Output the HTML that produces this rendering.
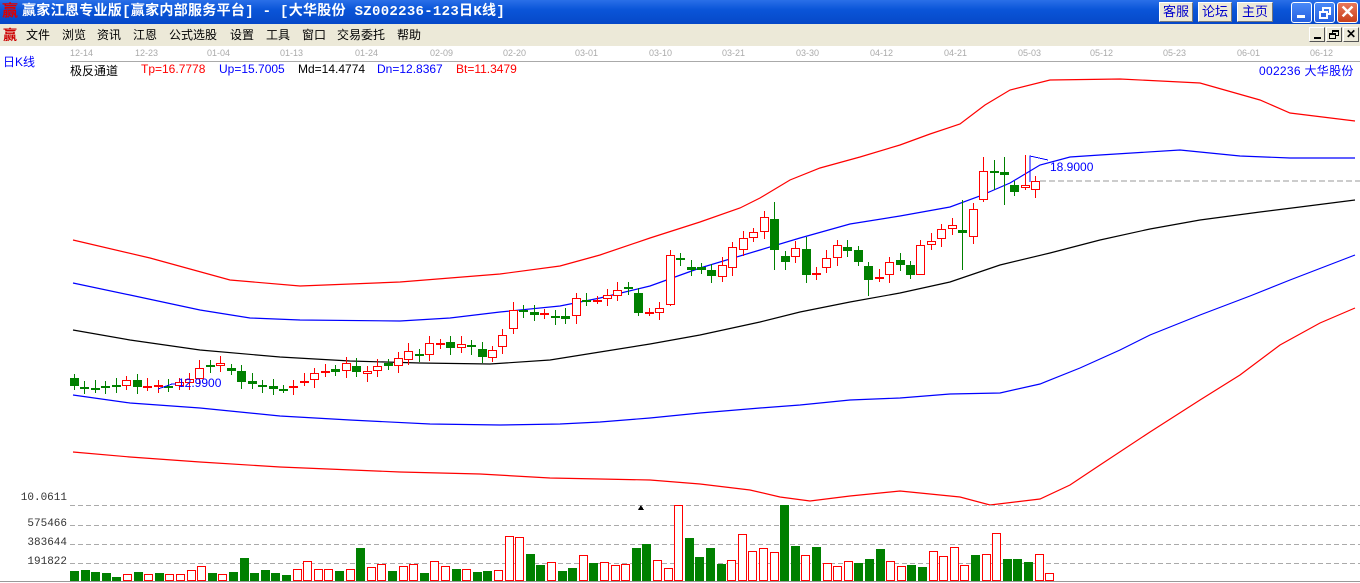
<!DOCTYPE html>
<html><head><meta charset="utf-8"><style>
*{margin:0;padding:0;box-sizing:border-box}
body{width:1360px;height:583px;overflow:hidden;background:#fff;font-family:"Liberation Sans","Noto Sans CJK SC",sans-serif;position:relative}
#title{position:absolute;left:0;top:0;width:1360px;height:24px;background:linear-gradient(#2a6fe8,#0a55d8 40%,#0648c8);color:#fff;font-weight:bold;font-size:14px;line-height:24px}
#title .t{position:absolute;left:22px;top:0;font-family:"Liberation Mono","Noto Sans CJK SC",monospace;letter-spacing:0.3px}
.ico{position:absolute;left:2px;top:3px;color:#d00;font-size:16px;font-weight:bold;line-height:18px;background:#fff0;}
.tb{position:absolute;top:2px;height:20px;background:#ece9d8;border:1px solid #fff;border-right-color:#777;border-bottom-color:#777;color:#00c;font-size:13px;line-height:18px;text-align:center;font-weight:normal}
.wb{position:absolute;top:2px;width:21px;height:21px;border:1px solid #fff;border-radius:3px;background:linear-gradient(#4a8af8,#2560e0)}
#menu{position:absolute;left:0;top:24px;width:1360px;height:22px;background:#ece9d8;font-size:12px;line-height:22px;color:#000}
#menu span{position:absolute;top:0}
.mb{position:absolute;top:27px;width:16px;height:15px;background:#ece9d8;border:1px solid #fff;border-right-color:#555;border-bottom-color:#555}
.d{position:absolute;top:48px;font-size:9px;color:#aaa}
.h{position:absolute;top:62px;font-size:12px}
.v{position:absolute;font-size:11px;color:#333;right:1293px;font-family:"Liberation Mono",monospace}
</style></head><body>
<div id="title"><span class="ico">赢</span><span class="t">赢家江恩专业版[赢家内部服务平台] - [大华股份  SZ002236-123日K线]</span>
<div class="tb" style="left:1159px;width:34px">客服</div>
<div class="tb" style="left:1198px;width:34px">论坛</div>
<div class="tb" style="left:1237px;width:36px">主页</div>
<div class="wb" style="left:1291px"><div style="position:absolute;left:5px;top:12px;width:8px;height:3px;background:#fff"></div></div>
<div class="wb" style="left:1314px"><div style="position:absolute;left:7px;top:4px;width:9px;height:8px;border:2px solid #fff"></div><div style="position:absolute;left:4px;top:8px;width:9px;height:8px;border:2px solid #fff;background:#2d66e4"></div></div>
<div class="wb" style="left:1337px;background:linear-gradient(#e8785a,#c8401a);color:#fff;font-size:18px;line-height:18px;text-align:center">✕</div>
</div>
<div id="menu"><span style="left:3px;color:#c00;font-weight:bold;font-size:14px">赢</span>
<span style="left:26px">文件</span><span style="left:62px">浏览</span><span style="left:97px">资讯</span><span style="left:133px">江恩</span><span style="left:169px">公式选股</span><span style="left:230px">设置</span><span style="left:266px">工具</span><span style="left:302px">窗口</span><span style="left:337px">交易委托</span><span style="left:397px">帮助</span></div>
<div class="mb" style="left:1309px"><div style="position:absolute;left:4px;top:9px;width:7px;height:2px;background:#000"></div></div>
<div class="mb" style="left:1326px"><div style="position:absolute;left:5px;top:2px;width:7px;height:6px;border:1px solid #000;border-top-width:2px"></div><div style="position:absolute;left:2px;top:5px;width:7px;height:6px;border:1px solid #000;border-top-width:2px;background:#ece9d8"></div></div>
<div class="mb" style="left:1343px;font-size:12px;line-height:13px;text-align:center;font-weight:bold">✕</div>
<div style="position:absolute;left:70px;top:61px;width:1290px;height:1px;background:#aaa"></div>
<div class="d" style="left:70px">12-14</div><div class="d" style="left:135px">12-23</div><div class="d" style="left:207px">01-04</div><div class="d" style="left:280px">01-13</div><div class="d" style="left:355px">01-24</div><div class="d" style="left:430px">02-09</div><div class="d" style="left:503px">02-20</div><div class="d" style="left:575px">03-01</div><div class="d" style="left:649px">03-10</div><div class="d" style="left:722px">03-21</div><div class="d" style="left:796px">03-30</div><div class="d" style="left:870px">04-12</div><div class="d" style="left:944px">04-21</div><div class="d" style="left:1018px">05-03</div><div class="d" style="left:1090px">05-12</div><div class="d" style="left:1163px">05-23</div><div class="d" style="left:1237px">06-01</div><div class="d" style="left:1310px">06-12</div>
<div style="position:absolute;left:3px;top:53px;font-size:12px;color:#00f">日K线</div>
<div class="h" style="left:70px">极反通道</div>
<div class="h" style="left:141px;color:#f00">Tp=16.7778</div>
<div class="h" style="left:219px;color:#00f">Up=15.7005</div>
<div class="h" style="left:298px">Md=14.4774</div>
<div class="h" style="left:377px;color:#00f">Dn=12.8367</div>
<div class="h" style="left:456px;color:#f00">Bt=11.3479</div>
<div class="h" style="left:1259px;color:#00f;font-size:12px;letter-spacing:0.3px">002236 大华股份</div>
<div class="v" style="top:492px">10.0611</div>
<div class="v" style="top:518px">575466</div>
<div class="v" style="top:537px">383644</div>
<div class="v" style="top:556px">191822</div>
<svg id="s" width="1360" height="583" style="position:absolute;left:0;top:0" shape-rendering="crispEdges"></svg>
<script>
var s=document.getElementById('s'),h='';
function pl(p,c){h+='<polyline fill="none" stroke="'+c+'" stroke-width="1.2" shape-rendering="auto" points="'+p+'"/>';}
pl("73,240 150,258 230,280 300,286 400,282 500,274 560,266 600,255 650,238 700,222 740,208 760,198 790,180 820,168 860,157 900,145 930,134 960,124 985,105 1010,90 1050,80 1120,79 1200,83 1260,100 1290,113 1355,121","#f00");
pl("73,283 130,295 200,310 250,318 300,320 400,321 450,318 500,312 560,306 600,298 650,286 700,268 760,250 800,238 850,224 900,216 950,207 980,196 1010,183 1040,165 1070,157 1100,155 1180,150 1240,156 1290,158 1355,158","#00f");
pl("73,330 130,340 200,350 280,357 350,361 420,363 490,364 550,360 600,352 650,344 700,335 760,322 800,312 850,302 900,293 950,282 1000,265 1050,253 1100,240 1150,229 1200,220 1260,212 1300,207 1355,200","#000");
pl("73,395 130,403 200,408 280,416 350,420 430,424 500,425 560,424 600,422 650,418 700,413 760,408 800,405 850,400 900,398 950,394 1000,393 1040,384 1080,368 1120,350 1150,335 1200,315 1250,296 1290,280 1355,255","#00f");
pl("73,452 130,457 200,462 280,467 400,472 480,474 550,478 600,479 650,480 700,484 750,490 780,497 810,501 850,496 900,491 960,497 990,505 1040,499 1070,485 1100,465 1150,432 1200,400 1240,375 1280,345 1320,323 1355,308","#f00");
h+='<line x1="1040" y1="181" x2="1360" y2="181" stroke="#999" stroke-dasharray="6,3"/>';
var C=[['g',378,386],['g',387,387],['g',387.5,387.5],['g',386,386],['g',385,387],['r',380,386],['g',380,387],['r',386,386],['r',384.6,384.6],['g',386,386],['r',382,386],['r',378.5,383],['r',367.5,378.5],['g',365,365],['r',363,366],['g',368,371],['g',371,382],['g',381,384],['g',385,385],['g',386,389],['g',388.6,388.6],['r',386,387.5],['r',381,381],['r',373,380],['r',371,371],['g',368.6,372],['r',362.5,371],['g',366,372],['r',370.7,374],['r',366,370.7],['g',363,366],['r',358,366],['r',351,360],['g',353.6,353.6],['r',343,355],['r',343,345],['g',342,347.5],['r',343.6,348],['g',345,347],['g',348.6,357],['r',350,358],['r',335,347],['r',309.6,329],['g',310,310],['g',312,315],['r',313,315],['g',316,317.5],['g',315.7,318.6],['r',298,316],['g',300,300],['r',300,300],['r',295,299],['r',290,296],['g',287,287],['g',293,313],['r',312,312],['r',308,313],['r',255,305],['g',258,258],['g',267,270],['g',267,270],['g',270,276],['r',265,277],['r',247,268],['r',238,250],['r',232,238],['r',217,232],['g',219,250],['g',256,262],['r',248,257],['g',249,275],['r',273,273],['r',258,268],['r',245,258],['g',247,251],['g',250,262],['g',266,280],['r',277,277],['r',262,275],['g',260,265],['g',265,275],['r',245,275],['r',241,245],['r',229,239],['r',225,229],['g',230,233],['r',209,237],['r',171,200],['g',171,171],['g',172,175],['g',185,192],['r',185,188],['r',181,190]];
var W={57:[250,306],67:[202,270],81:[240,268],85:[200,270],87:[157,202],88:[160,190],89:[157,205],91:[155,190],92:[176,198],76:[262,296],70:[237,283],54:[288,316]};
for(var i=0;i<C.length;i++){var c=C[i],x=Math.round(74+i*10.45),col=c[0]=='r'?'#f00':'#008000',t=Math.round(c[1]),b=Math.round(c[2]);
var hi=t-4-(i*7%5),lo=b+4+(i*3%5);if(W[i]){hi=W[i][0];lo=W[i][1];}
h+='<line x1="'+(x+0.5)+'" y1="'+hi+'" x2="'+(x+0.5)+'" y2="'+lo+'" stroke="'+col+'"/>';
if(b-t<2)h+='<rect x="'+(x-4)+'" y="'+t+'" width="9" height="2" fill="'+col+'"/>';
else if(c[0]=='r')h+='<rect x="'+(x-3.5)+'" y="'+(t+0.5)+'" width="8" height="'+(b-t-1)+'" fill="#fff" stroke="#f00"/>';
else h+='<rect x="'+(x-4)+'" y="'+t+'" width="9" height="'+(b-t)+'" fill="#008000"/>';}
h+='<text x="1050" y="171" fill="#00f" font-size="12" font-family="Liberation Sans">18.9000</text><polyline fill="none" stroke="#00f" points="1030,182 1030,156 1048,160"/>';
h+='<text x="178" y="387" fill="#00f" font-size="12" font-family="Liberation Sans">12.9900</text><polyline fill="none" stroke="#00f" points="158,389 172,384 176,384"/>';
[505,525,544,563].forEach(function(y){h+='<line x1="70" y1="'+(y+.5)+'" x2="1360" y2="'+(y+.5)+'" stroke="#aaa" stroke-dasharray="5,3"/>';});
h+='<line x1="0" y1="581.5" x2="1360" y2="581.5" stroke="#999"/>';
h+='<polygon points="638,510 641,505 644,510" fill="#000"/>';
var V="g571 g570 g572 g573 g577 r574 g572 r574 g573 r574 r574 r570 r566 g573 r574 g572 g558 g573 g570 g573 g575 r569 r561 r569 r569 g571 r569 g548 r567 r564 g571 r566 r564 g573 r561 r566 g569 r569 g572 g571 r570 r536 r537 g554 g565 r562 g571 g568 r555 g563 r562 r565 r564 g548 g544 r560 r568 r505 g538 g557 g548 g564 r560 r534 r551 r548 r552 g505 g546 r555 g547 r563 r566 r561 g563 g559 g549 r561 r566 g565 g567 r551 r556 r547 r565 g555 r554 r533 g559 g559 g562 r554 r573".split(' ');
for(var j=0;j<V.length;j++){var x=Math.round(70+j*10.6),t=+V[j].slice(1);
if(V[j][0]=='r')h+='<rect x="'+(x+0.5)+'" y="'+(t+0.5)+'" width="8" height="'+(581-t-1)+'" fill="#fff" stroke="#f00"/>';
else h+='<rect x="'+x+'" y="'+t+'" width="9" height="'+(581-t)+'" fill="#008000"/>';}
s.innerHTML=h;
</script>
</body></html>
